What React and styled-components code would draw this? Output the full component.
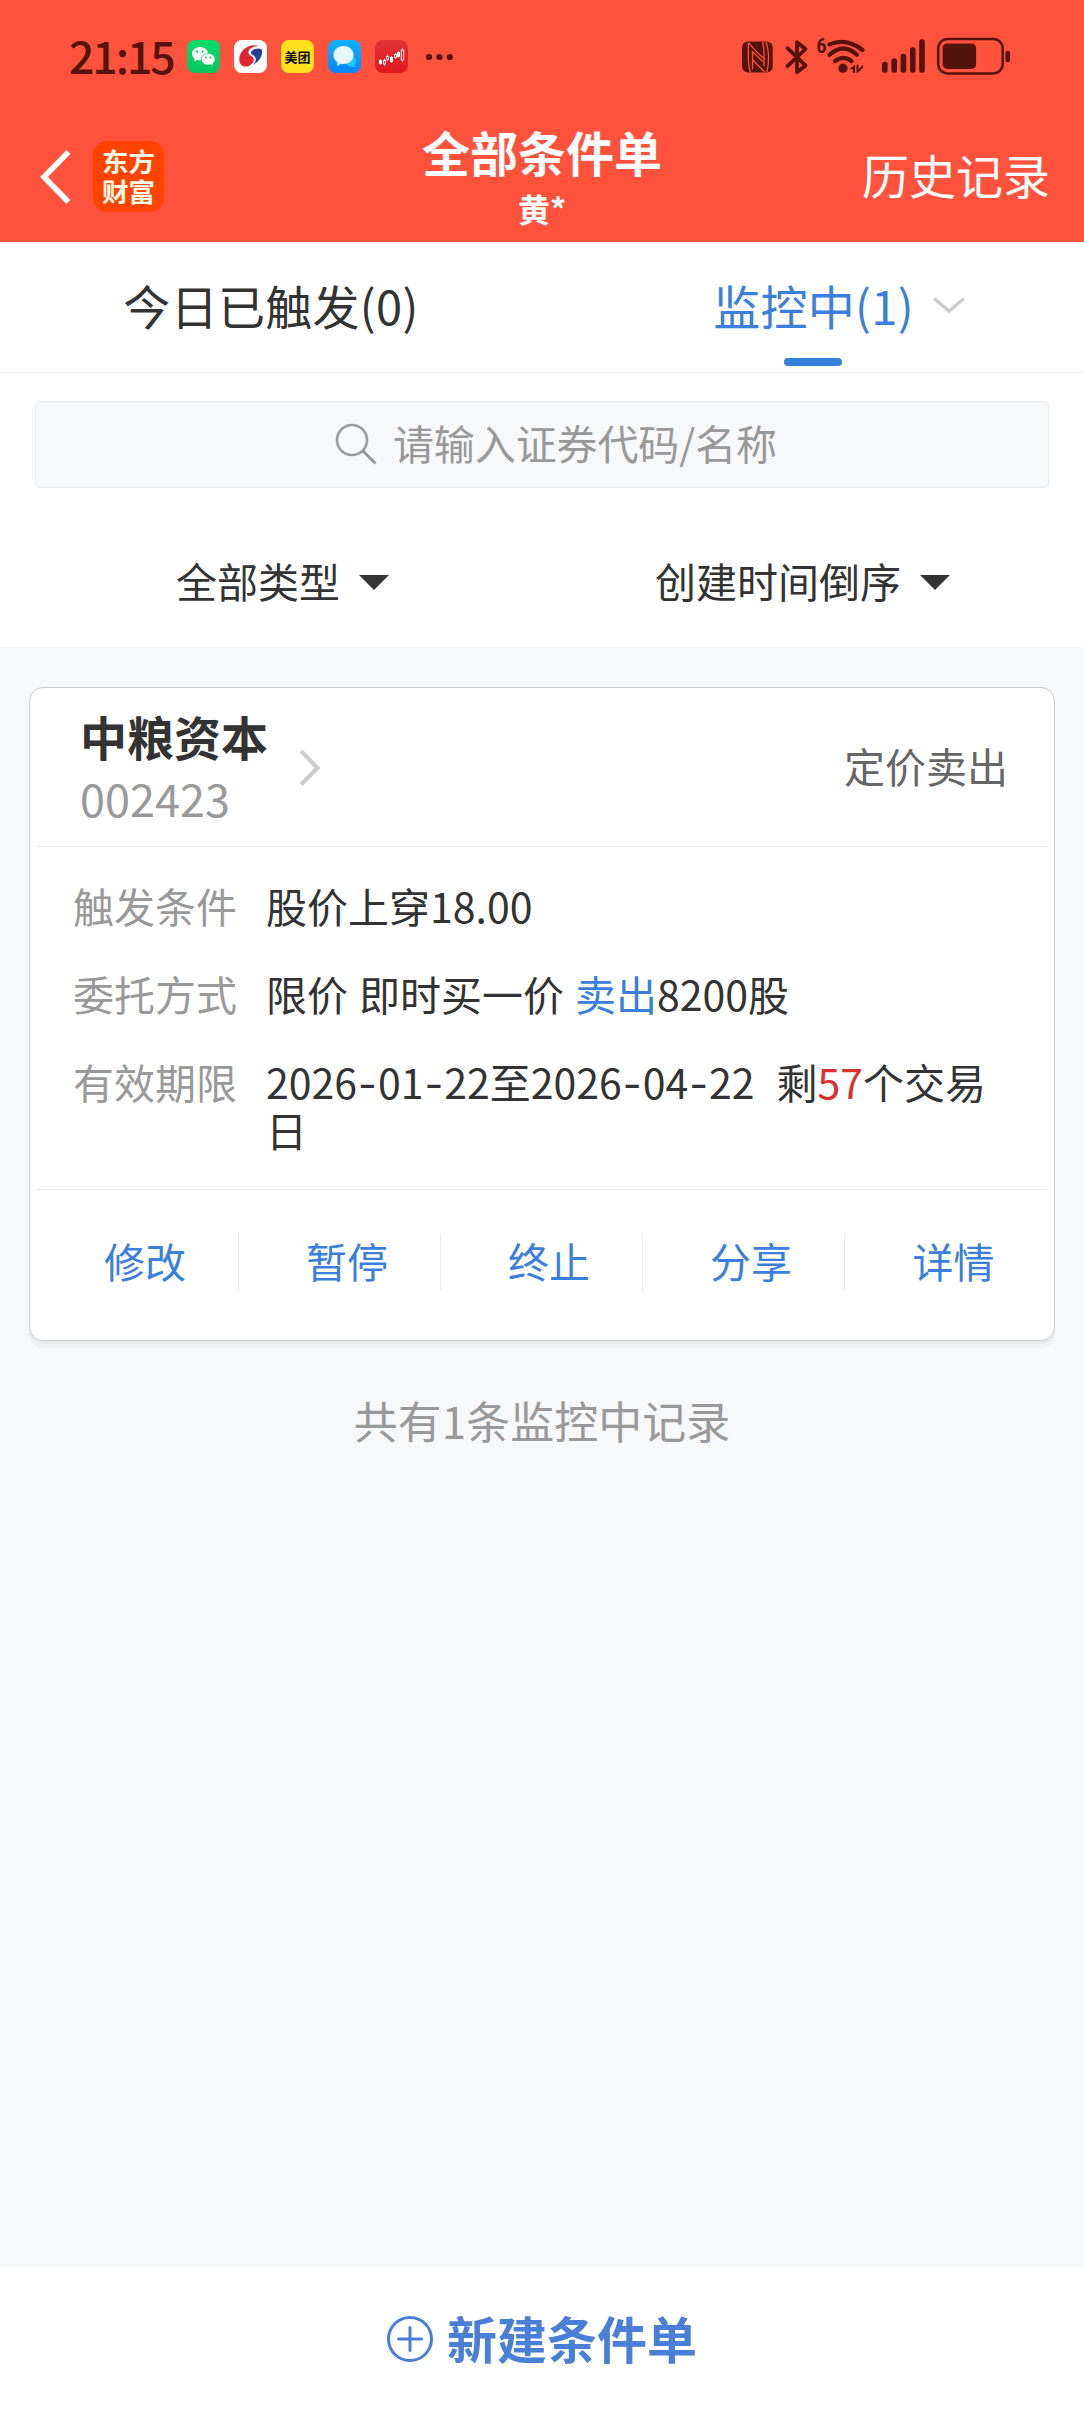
import React from 'react'
import styled, { createGlobalStyle } from 'styled-components'

const GlobalStyle = createGlobalStyle`
  * {
    box-sizing: border-box;
  }
  body {
    margin: 0;
    background: #f7f8fa;
    color: #333;
    font-family: "Noto Sans CJK SC", "Noto Sans", sans-serif;
  }
`

const Page = styled.div`
  display: flex;
  flex-direction: column;
  height: 2412px;
  width: 1084px;
  overflow: hidden;
`

/* ---------- header ---------- */

const Header = styled.header`
  height: 242px;
  background: #ff523c;
`

const StatusBar = styled.div`
  display: flex;
  align-items: center;
  height: 113px;
  padding: 0 74px 0 69px;
  color: #54130d;
`

const Clock = styled.div`
  width: 118px;
  font-size: 44.5px;
  font-weight: 500;
  line-height: 60px;
  letter-spacing: -2px;
  white-space: nowrap;
  padding-bottom: 3px;
`

const AppIcons = styled.div`
  display: flex;
  align-items: center;
  gap: 14px;
  flex: 1;
`

const AppTile = styled.div`
  display: flex;
  align-items: center;
  justify-content: center;
  width: 33px;
  height: 33px;
  border-radius: 8px;
  background: ${(props) => props.$bg};
  color: #111;
  font-size: 13px;
  font-weight: 700;
  line-height: 16px;
  white-space: nowrap;
`

const MoreDots = styled.svg`
  margin-left: 3px;
`

const StatusIcons = styled.svg`
  overflow: visible;
`

const NavBar = styled.div`
  display: grid;
  grid-template-columns: 1fr 300px 1fr;
  height: 129px;
`

const NavLeft = styled.div`
  display: flex;
  align-items: center;
  padding-left: 38px;
  height: 127px;
`

const BrandTile = styled.div`
  width: 71px;
  height: 71px;
  margin-left: 20px;
  padding: 5px 0 0 9px;
  border-radius: 14px;
  background: #ff4400;
  color: #fffbea;
  font-size: 26.5px;
  font-weight: 700;
  line-height: 30px;
`

const NavTitle = styled.div`
  display: flex;
  flex-direction: column;
  align-items: center;
  color: #fff;
  font-weight: 700;
`

const TitleText = styled.div`
  margin-top: 8px;
  font-size: 48px;
  line-height: 60px;
`

const AccountText = styled.div`
  font-size: 32px;
  line-height: 40px;
  margin-top: 7px;
`

const HistoryLink = styled.div`
  justify-self: end;
  padding: 30px 34px 0 0;
  color: #fff;
  font-size: 47px;
  line-height: 62px;
`

/* ---------- tabs, search, filters ---------- */

const TopPanel = styled.section`
  height: 405px;
  background: #fff;
`

const Tabs = styled.div`
  display: grid;
  grid-template-columns: 1fr 1fr;
  height: 131px;
  border-bottom: 1px solid #ebebeb;
`

const Tab = styled.div`
  display: flex;
  flex-direction: column;
  align-items: center;
  padding-top: 32px;
  color: ${(props) => (props.$active ? '#3a7fdb' : '#333')};
  font-size: 47px;
  line-height: 62px;
`

const TabLabel = styled.div`
  display: flex;
  align-items: center;
  letter-spacing: 0.3px;
  gap: 18px;
  padding-left: ${(props) => (props.$active ? '53px' : '0')};
`

const TabLine = styled.div`
  width: 58px;
  height: 8px;
  margin-top: 22px;
  border-radius: 4px;
  background: #3680de;
`

const SearchBox = styled.div`
  display: flex;
  align-items: center;
  justify-content: center;
  gap: 16px;
  height: 87px;
  margin: 28px 35px 0;
  border: 1px solid #ebebeb;
  border-radius: 5px;
  background: #f7f8fa;
  color: #999;
  font-size: 41px;
  letter-spacing: -0.1px;
  padding-left: 28px;
  padding-bottom: 5px;
`

const SearchIcon = styled.svg`
  margin-top: 4px;
`

const Filters = styled.div`
  display: flex;
  justify-content: space-between;
  padding: 62px 134px 0 176px;
  font-size: 41px;
  line-height: 60px;
`

const Filter = styled.div`
  display: flex;
  align-items: center;
  gap: 19px;
`

const Caret = styled.span`
  margin-top: 4px;
  border-left: 15px solid transparent;
  border-right: 15px solid transparent;
  border-top: 15px solid #333;
`

/* ---------- order card ---------- */

const List = styled.main`
  flex: 1;
  padding: 40px 29px 0;
`

const Card = styled.article`
  height: 654px;
  padding: 0 7px;
  border: 1px solid #ccc;
  border-radius: 14px;
  background: #fff;
  box-shadow: 0 3px 0 #e9eaec, 0 7px 0 #f1f2f4;
`

const CardHead = styled.div`
  display: flex;
  align-items: center;
  height: 159px;
  padding: 0 39px 0 43px;
  border-bottom: 1px solid #ebebeb;
`

const Stock = styled.div`
  padding-bottom: 1px;
`

const StockName = styled.div`
  font-size: 47px;
  font-weight: 700;
  line-height: 62px;
`

const StockCode = styled.div`
  color: #999;
  font-size: 45px;
  line-height: 62px;
`

const StockArrow = styled.svg`
  margin-left: 30px;
`

const OrderType = styled.div`
  margin-left: auto;
  padding-bottom: 5px;
  color: #666;
  font-size: 41px;
`

const Details = styled.div`
  display: flex;
  flex-direction: column;
  gap: 40px;
  height: 343px;
  padding: 34px 40px 0 36px;
  border-bottom: 1px solid #ebebeb;
  font-size: 41px;
  line-height: 48px;
`

const DetailRow = styled.div`
  display: flex;
`

const DetailLabel = styled.div`
  flex: none;
  width: 193px;
  color: #999;
`

const DetailValue = styled.div`
  word-spacing: 1.8px;
`

const Side = styled.span`
  color: #3a7fdb;
`

const DaysLeft = styled.span`
  color: #d93030;
`

const Dash = styled.span`
  padding: 0 1px;
  font-family: Inter, sans-serif;
  line-height: 1;
`

const Actions = styled.div`
  display: grid;
  grid-template-columns: repeat(5, 1fr);
  padding-top: 43px;
`

const Action = styled.div`
  height: 58px;
  padding-left: 15px;
  border-right: 1px solid #ebebeb;
  color: #3a7fdb;
  font-size: 41px;
  line-height: 54px;
  text-align: center;

  &:last-child {
    border-right: none;
  }
`

const Summary = styled.div`
  margin-top: 49px;
  color: #999;
  font-size: 44px;
  line-height: 60px;
  text-align: center;
`

const CreateBar = styled.footer`
  display: flex;
  justify-content: center;
  gap: 14px;
  height: 145px;
  padding-top: 39px;
  background: #fff;
  color: #4a7fd7;
  font-size: 50px;
  font-weight: 700;
  line-height: 62px;
`

const PlusIcon = styled.svg`
  margin-top: 10px;
`

const WechatIcon = () => (
  <svg width="25" height="22" viewBox="0 0 25 22" fill="#fff">
    <path d="M9 1C4.300 1 1 4 1 7.700c0 2.100 1 3.800 2.700 5L3 15.500l3-1.600c1 .3 2 .4 3 .4 4.700 0 8-3 8-6.700S13.700 1 9 1z" />
    <path stroke="#07cf63" strokeWidth="0.800" d="M17.200 7.500c-4 0-6.900 2.600-6.900 5.800s2.900 5.800 6.900 5.800c.9 0 1.700-.1 2.500-.4l2.500 1.400-.6-2.300c1.500-1.100 2.500-2.700 2.500-4.500 0-3.200-2.900-5.800-6.900-5.800z" />
    <g fill="#07b85a">
      <circle cx="6.200" cy="5.600" r="1.100" />
      <circle cx="11.500" cy="5.600" r="1.100" />
      <circle cx="15" cy="11.500" r="0.900" />
      <circle cx="19.500" cy="11.500" r="0.900" />
    </g>
  </svg>
)

const BankIcon = () => (
  <svg width="26" height="25" viewBox="0 0 26 25">
    <path fill="#e02631" d="M21 2C12-1 2 5 1.300 14.500 1 20 4.500 23 9 22.500c5-.6 8-5 6.500-8.500-1-2.500-5.500-2.500-5-6C11 4 16.500 2 21 2z" />
    <path fill="#233f92" d="M23.500 5c2 5-1.500 14-10 16 3.500-2.500 5-6 3-8.500-1.500-1.800-4.500-2-3.500-4.500C14 5.500 18.500 3.500 23.500 5z" />
    <path fill="none" stroke="#fff" strokeWidth="1.600" d="M22 3.300c-5 0-10 1.700-10.300 5-.3 2.700 3.700 3 4.800 5.500 1.300 3-1 6.700-4.500 8.200" />
  </svg>
)

const ChatIcon = () => (
  <svg width="26" height="24" viewBox="0 0 26 24">
    <circle cx="19" cy="16.500" r="5" fill="#22c8fb" />
    <path fill="#22c8fb" d="M20 18l4 4-5-.5z" />
    <path fill="#e6f7ff" d="M11.500 1C5.500 1 1.500 5 1.500 10c0 3 1.500 5.700 4 7.300L5 21l4-2.300c.8.200 1.600.3 2.500.3 6 0 10-4 10-9s-4-9-10-9z" />
  </svg>
)

const StockIcon = () => (
  <svg width="27" height="20" viewBox="0 0 27 20">
    <g fill="#fff">
      <rect x="1" y="13" width="3" height="4" />
      <rect x="12" y="10" width="3" height="5" />
      <rect x="19" y="5" width="3" height="5" />
    </g>
    <path stroke="#fff" strokeWidth="0.700" d="M2.500 12V18M6.500 11.500V19M9.500 7.500V14M13.500 9v7M17.500 6v6M20.500 4v7M24.500 1v14" />
    <g fill="#e33a3a" stroke="#fff" strokeWidth="0.800">
      <rect x="5.400" y="13.500" width="2.200" height="3.500" />
      <rect x="8.400" y="9.500" width="2.200" height="3" />
      <rect x="16.400" y="7.500" width="2.200" height="3" />
      <rect x="23.200" y="3" width="2.600" height="10" />
    </g>
  </svg>
)

const SystemIcons = () => (
  <StatusIcons width="270" height="40" viewBox="0 1.800 270 40" fill="#54130d">
    {/* nfc */}
    <rect x="2" y="6.300" width="30.700" height="31" rx="6" />
    <g fill="none" stroke="#ff523c" strokeWidth="1.300">
      <path d="M8.500 7.500Q7.500 30 10.500 37.300" />
      <path d="M8.500 7.500Q16 17 24 23.500" />
      <path d="M12.500 34V16.500L23 26.500" />
      <path d="M12.500 24.500Q19 31 25 37.300" />
      <path d="M22.500 6.300Q24.500 12 24 31" />
      <path d="M26 6.300Q30.500 20 27 37" />
    </g>
    {/* bluetooth */}
    <path
      d="M47.500 13l18 17.200-8.500 6.800V7l8.500 6.800L47.500 31"
      fill="none"
      stroke="#54130d"
      strokeWidth="3.800"
      strokeLinejoin="round"
      strokeLinecap="round"
    />
    {/* wifi 6 */}
    <text x="76.500" y="18" fontSize="21" fontWeight="700" fontFamily="Roboto, sans-serif" textLength="10" lengthAdjust="spacingAndGlyphs">6</text>
    <g fill="none" stroke="#54130d" strokeWidth="4.200" strokeLinecap="round">
      <path d="M89.500 9.200q17-7 33 5.600" />
      <path d="M89.500 19.600q14-12.500 27.500 0" />
      <path d="M95 26q8.500-6.500 16.500 0" />
    </g>
    <circle cx="103" cy="33" r="4.600" />
    <path d="M109.500 34l5.500-4.500v8h-2v-3.500zM116.500 29.500h2v4.500l4.500-4.500v3l-5.500 5h-1z" />
    {/* signal */}
    <rect x="142" y="26.500" width="5.600" height="11" rx="2.500" />
    <rect x="151.400" y="23" width="5.600" height="14.500" rx="2.500" />
    <rect x="160.600" y="18.500" width="5.600" height="19" rx="2.500" />
    <rect x="170" y="12" width="5.600" height="25.500" rx="2.500" />
    <rect x="179.200" y="4" width="5.600" height="33.500" rx="2.500" />
    {/* battery */}
    <rect x="198.200" y="3.700" width="64.500" height="34.500" rx="9.500" fill="none" stroke="#54130d" strokeWidth="2.500" />
    <rect x="202.600" y="8.200" width="33.500" height="25.500" rx="4.500" />
    <rect x="265.500" y="15.500" width="4.500" height="11.500" rx="2" />
  </StatusIcons>
)

const actions = ['修改', '暂停', '终止', '分享', '详情']

const DateText = ({ value }) =>
  value.split('-').map((part, index) => (
    <React.Fragment key={index}>
      {index > 0 ? <Dash>-</Dash> : null}
      {part}
    </React.Fragment>
  ))

const App = () => {
  return (
    <Page>
      <GlobalStyle />
      <Header>
        <StatusBar>
          <Clock>21:15</Clock>
          <AppIcons>
            <AppTile $bg="linear-gradient(#05dc6c, #08c45c)"><WechatIcon /></AppTile>
            <AppTile $bg="#fff"><BankIcon /></AppTile>
            <AppTile $bg="#ffe11f">美团</AppTile>
            <AppTile $bg="linear-gradient(#0cb2ff, #0b84ff)"><ChatIcon /></AppTile>
            <AppTile $bg="linear-gradient(#e23236, #de1a1e)"><StockIcon /></AppTile>
            <MoreDots width="30" height="8" viewBox="0 0 30 8" fill="#54130d">
              <circle cx="4" cy="4" r="3.100" />
              <circle cx="14.400" cy="4" r="3.100" />
              <circle cx="24.800" cy="4" r="3.100" />
            </MoreDots>
          </AppIcons>
          <SystemIcons />
        </StatusBar>
        <NavBar>
          <NavLeft>
            <svg width="35" height="56" viewBox="0 0 35 56" fill="none" stroke="#fff" strokeWidth="5.500">
              <path d="M30.500 3L6 28l24.500 25" />
            </svg>
            <BrandTile>东方<br />财富</BrandTile>
          </NavLeft>
          <NavTitle>
            <TitleText>全部条件单</TitleText>
            <AccountText>黄*</AccountText>
          </NavTitle>
          <HistoryLink>历史记录</HistoryLink>
        </NavBar>
      </Header>

      <TopPanel>
        <Tabs>
          <Tab>
            <TabLabel>今日已触发(0)</TabLabel>
          </Tab>
          <Tab $active>
            <TabLabel $active>
              监控中(1)
              <svg width="34" height="20" viewBox="0 0 34 20" fill="none" stroke="#ccc" strokeWidth="3.400">
                <path d="M2 3.500l15 12.500L32 3.500" />
              </svg>
            </TabLabel>
            <TabLine />
          </Tab>
        </Tabs>
        <SearchBox>
          <SearchIcon width="42" height="42" viewBox="0 0 42 42" fill="none" stroke="#999" strokeWidth="2.600">
            <circle cx="17" cy="17" r="15" />
            <path d="M27.500 27.500L40.500 40.500" strokeWidth="3" />
          </SearchIcon>
          请输入证券代码/名称
        </SearchBox>
        <Filters>
          <Filter>全部类型<Caret /></Filter>
          <Filter>创建时间倒序<Caret /></Filter>
        </Filters>
      </TopPanel>

      <List>
        <Card>
          <CardHead>
            <Stock>
              <StockName>中粮资本</StockName>
              <StockCode>002423</StockCode>
            </Stock>
            <StockArrow width="24" height="38" viewBox="0 0 24 38" fill="none" stroke="#ccc" strokeWidth="4">
              <path d="M3 3L19.500 20 3 36.500" />
            </StockArrow>
            <OrderType>定价卖出</OrderType>
          </CardHead>
          <Details>
            <DetailRow>
              <DetailLabel>触发条件</DetailLabel>
              <DetailValue>股价上穿18.00</DetailValue>
            </DetailRow>
            <DetailRow>
              <DetailLabel>委托方式</DetailLabel>
              <DetailValue>限价 即时买一价 <Side>卖出</Side>8200股</DetailValue>
            </DetailRow>
            <DetailRow>
              <DetailLabel>有效期限</DetailLabel>
              <DetailValue>
                <DateText value="2026-01-22" />至<DateText value="2026-04-22" />
                &nbsp; 剩<DaysLeft>57</DaysLeft>个交易{'日'}
              </DetailValue>
            </DetailRow>
          </Details>
          <Actions>
            {actions.map((item) => <Action key={item}>{item}</Action>)}
          </Actions>
        </Card>
        <Summary>共有1条监控中记录</Summary>
      </List>

      <CreateBar>
        <PlusIcon width="46" height="46" viewBox="0 0 46 46" fill="none" stroke="#4a7fd7" strokeWidth="3">
          <circle cx="23" cy="23" r="21.500" />
          <path d="M23 11.500v23M11.500 23h23" strokeLinecap="round" />
        </PlusIcon>
        新建条件单
      </CreateBar>
    </Page>
  )
}

export default App
